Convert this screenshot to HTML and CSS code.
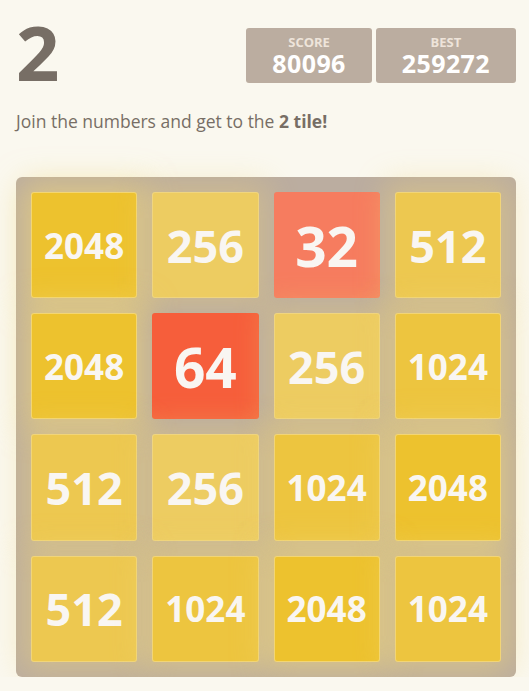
FILE: index.html
```html
<!DOCTYPE html>
<html lang="en">
<head>
<meta charset="utf-8">
<title>2</title>
<link rel="stylesheet" href="styles.css">
</head>
<body>
<div class="container">
  <div class="heading">
    <h1 class="title">2</h1>
    <div class="scores">
      <div class="score-box">
        <div class="score-label">Score</div>
        <div class="score-value">80096</div>
      </div>
      <div class="score-box">
        <div class="score-label">Best</div>
        <div class="score-value">259272</div>
      </div>
    </div>
  </div>
  <p class="intro">Join the numbers and get to the <strong>2 tile!</strong></p>
  <div class="grid">
    <div class="tile t2048">2048</div>
    <div class="tile t256">256</div>
    <div class="tile t32">32</div>
    <div class="tile t512">512</div>

    <div class="tile t2048">2048</div>
    <div class="tile t64">64</div>
    <div class="tile t256">256</div>
    <div class="tile t1024">1024</div>

    <div class="tile t512">512</div>
    <div class="tile t256">256</div>
    <div class="tile t1024">1024</div>
    <div class="tile t2048">2048</div>

    <div class="tile t512">512</div>
    <div class="tile t1024">1024</div>
    <div class="tile t2048">2048</div>
    <div class="tile t1024">1024</div>
  </div>
</div>
</body>
</html>
```
FILE: styles.css
```css
html, body {
  margin: 0;
  padding: 0;
  background: #faf8ef;
  color: #776e65;
  font-family: "Open Sans", "Noto Sans", Arial, sans-serif;
}

.container {
  width: 500px;
  margin-left: 16px;
  padding-top: 14px;
}

.heading {
  display: flex;
  justify-content: space-between;
  align-items: flex-start;
  height: 76px;
}

.title {
  margin: 0;
  font-size: 76px;
  line-height: 76px;
  font-weight: 700;
  color: #776e65;
}

.scores {
  display: flex;
  gap: 4px;
  margin-top: 14px;
}

.score-box {
  background: #bbada0;
  border-radius: 3px;
  padding: 7.5px 26px;
  height: 40px;
  display: flex;
  flex-direction: column;
  align-items: center;
  color: #fff;
}

.score-label {
  font-size: 13px;
  line-height: 13px;
  font-weight: 700;
  text-transform: uppercase;
  color: #eee4da;
}

.score-value {
  font-size: 25px;
  line-height: 25px;
  font-weight: 700;
  letter-spacing: 0.4px;
  margin-top: 2.5px;
}

.intro {
  margin: 18.7px 0 0 0;
  font-size: 17.5px;
  line-height: 24px;
  color: #776e65;
}

.intro strong {
  font-weight: 700;
}

.grid {
  margin-top: 44.3px;
  width: 500px;
  height: 500px;
  box-sizing: border-box;
  padding: 15px;
  background: #bbada0;
  border-radius: 6px;
  display: grid;
  grid-template-columns: repeat(4, 1fr);
  grid-template-rows: repeat(4, 1fr);
  gap: 15px;
}

.tile {
  border-radius: 3px;
  color: #f9f6f2;
  font-weight: 700;
  display: flex;
  align-items: center;
  justify-content: center;
}

.t32 {
  background: #f67c5f;
  font-size: 55px;
}

.t64 {
  background: #f65e3b;
  font-size: 55px;
}

.t256 {
  background: #edcc61;
  font-size: 45px;
  box-shadow: 0 0 30px 10px rgba(243, 215, 116, 0.31746), inset 0 0 0 1px rgba(255, 255, 255, 0.19048);
}

.t512 {
  background: #edc850;
  font-size: 45px;
  box-shadow: 0 0 30px 10px rgba(243, 215, 116, 0.39683), inset 0 0 0 1px rgba(255, 255, 255, 0.2381);
}

.t1024 {
  background: #edc53f;
  font-size: 35px;
  box-shadow: 0 0 30px 10px rgba(243, 215, 116, 0.47619), inset 0 0 0 1px rgba(255, 255, 255, 0.28571);
}

.t2048 {
  background: #edc22e;
  font-size: 35px;
  box-shadow: 0 0 30px 10px rgba(243, 215, 116, 0.55556), inset 0 0 0 1px rgba(255, 255, 255, 0.33333);
}
```
